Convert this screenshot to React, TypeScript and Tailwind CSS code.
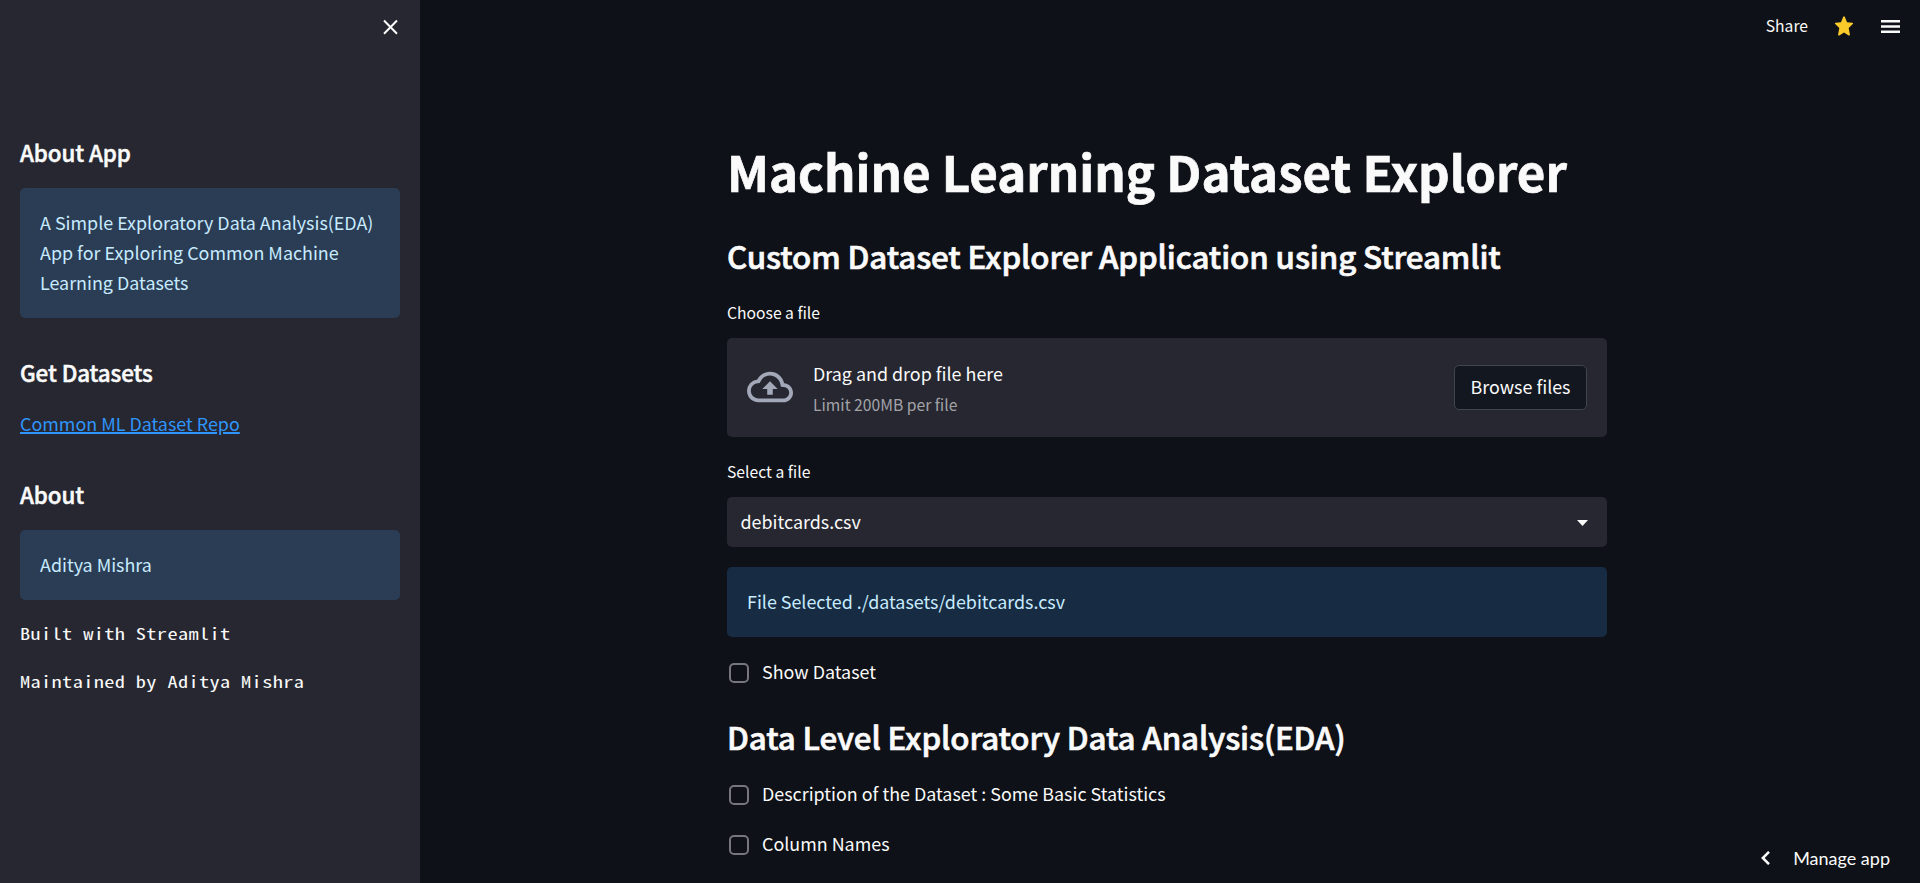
import type { ReactNode } from "react";

function Info({ children, tone }: { children: ReactNode; tone: "side" | "main" }) {
  return (
    <div
      className={
        "rounded-[5px] px-5 pt-[19px] pb-[21px] text-[17.9px] leading-[30px] text-[#c7ebff] " +
        (tone === "side" ? "bg-[#2b3d55]" : "bg-[#172c43]")
      }
    >
      {children}
    </div>
  );
}

function SideHeading({ children, className }: { children: ReactNode; className: string }) {
  return (
    <h3
      className={
        "text-[22.4px] leading-[30px] font-medium tracking-[-0.1px] [-webkit-text-stroke:0.5px_#fafafa] " + className
      }
    >
      {children}
    </h3>
  );
}

function MainHeading({ children, className }: { children: ReactNode; className: string }) {
  return (
    <h2
      className={
        "text-[31.3px] leading-[43px] font-medium tracking-[-0.1px] whitespace-nowrap [-webkit-text-stroke:0.7px_#fafafa] " +
        className
      }
    >
      {children}
    </h2>
  );
}

function MonoLine({ children }: { children: ReactNode }) {
  return (
    <p className="mt-[18px] origin-left scale-x-[1.27] font-['Noto_Sans_Mono_CJK_SC','Liberation_Mono',monospace] text-[16px] leading-[30px] font-light tracking-[0.29px] whitespace-nowrap">
      {children}
    </p>
  );
}

function CheckRow({ label, className }: { label: string; className: string }) {
  return (
    <label className={"flex h-[30px] items-start pl-0.5 " + className}>
      <span className="mt-[7px] size-5 rounded-[5px] border-2 border-[#75777c]" />
      <span className="ml-[13px] text-[17.9px] leading-[30px]">{label}</span>
    </label>
  );
}

export default function App() {
  return (
    <div className="flex h-[883px] w-full overflow-hidden bg-[#0e1117] font-['Noto_Sans_CJK_SC',sans-serif] text-[#fafafa]">
      <aside className="flex h-full w-[420px] shrink-0 flex-col bg-[#262730] px-5">
        <div className="flex h-[137px] shrink-0 justify-end pt-[17px]">
          <svg className="size-5" viewBox="0 0 20 20" fill="none" stroke="#fafafa" strokeWidth="2">
            <path d="M4 3.500 17 16.800M17 3.500 4 16.800" />
          </svg>
        </div>
        <SideHeading className="mb-[21px]">About App</SideHeading>
        <Info tone="side">A Simple Exploratory Data Analysis(EDA) App for Exploring Common Machine Learning Datasets</Info>
        <SideHeading className="mt-[39px] mb-[21px]">Get Datasets</SideHeading>
        <a
          href="#"
          className="self-start text-[17.9px] leading-[30px] text-[#2f95fb] underline decoration-2 underline-offset-[1px]"
        >
          Common ML Dataset Repo
        </a>
        <SideHeading className="mt-[41px] mb-[21px]">About</SideHeading>
        <Info tone="side">Aditya Mishra</Info>
        <MonoLine>Built with Streamlit</MonoLine>
        <MonoLine>Maintained by Aditya Mishra</MonoLine>
      </aside>

      <main className="relative flex grow flex-col">
        <header className="flex h-[138px] shrink-0 items-start justify-end pr-5">
          <span className="mt-[13px] text-[15.7px] leading-[25px]">Share</span>
          <svg className="mt-[16px] ml-[26px] h-5 w-5" viewBox="0 0 20 20" fill="#faca2b">
            <path d="M9.100.9a1 1 0 0 1 1.800 0l2.100 5.300 5.300.5c.8.100 1 .9.500 1.400L14.700 12l1.200 6.500c.100.8-.6 1.300-1.300.9L10 16.600l-4.600 2.800c-.7.4-1.400-.100-1.300-.9L5.300 12 1.200 8.100c-.5-.5-.3-1.300.5-1.400L7 6.200z" />
          </svg>
          <svg className="mt-[20px] ml-[27px] h-[13px] w-[19px]" viewBox="0 0 19 13" fill="#fafafa">
            <path d="M0 0h19v2.500H0zM0 5.300h19v2.400H0zM0 10.500h19V13H0z" />
          </svg>
        </header>

        <div className="flex flex-col items-center pr-1.5">
          <div className="flex w-[880px] flex-col">
            <h1 className="text-[49.2px] leading-[65px] font-bold whitespace-nowrap [-webkit-text-stroke:0.7px_#fafafa]">
              Machine Learning Dataset Explorer
            </h1>
            <MainHeading className="mt-[31px]">Custom Dataset Explorer Application using Streamlit</MainHeading>

            <p className="mt-[23px] mb-[13px] text-[15.7px] leading-[25px]">Choose a file</p>
            <section className="flex h-[99px] items-center rounded-[5px] bg-[#262730] px-5">
              <svg className="mb-0.5 h-[46px] w-[46px]" viewBox="0 0 24 24" fill="#a3a8b8">
                <path d="M19.350 10.040A7.490 7.490 0 0 0 12 4C9.110 4 6.600 5.640 5.350 8.040A5.994 5.994 0 0 0 0 14c0 3.310 2.690 6 6 6h13c2.760 0 5-2.240 5-5 0-2.640-2.050-4.780-4.650-4.960zM19 18H6c-2.210 0-4-1.790-4-4 0-2.050 1.530-3.760 3.560-3.970l1.070-.110.500-.950A5.469 5.469 0 0 1 12 6c2.620 0 4.880 1.860 5.390 4.430l.300 1.500 1.530.110A2.980 2.980 0 0 1 22 15c0 1.650-1.350 3-3 3zM8 13h2.550v3h2.900v-3H16l-4-4z" />
              </svg>
              <div className="ml-5 flex grow flex-col gap-1">
                <span className="text-[17.9px] leading-[30px]">Drag and drop file here</span>
                <span className="text-[15.7px] leading-[25px] text-[#a3a3a8]">Limit 200MB per file</span>
              </div>
              <button className="flex h-[45px] w-[133px] items-center justify-center rounded-[5px] border border-[#41444c] bg-[#131720] pb-[3px] text-[17.9px] leading-[30px]">
                Browse files
              </button>
            </section>

            <p className="mt-[22px] mb-[13px] text-[15.7px] leading-[25px]">Select a file</p>
            <div className="mb-5 flex h-[50px] items-center justify-between rounded-[5px] bg-[#262730] pr-[19px] pb-[2px] pl-[13.500px] text-[17.9px] leading-[30px]">
              <span>debitcards.csv</span>
              <svg className="mt-[4px] h-[6px] w-[11px]" viewBox="0 0 11 6" fill="#fafafa">
                <path d="M0 0h11L5.500 6z" />
              </svg>
            </div>
            <Info tone="main">File Selected ./datasets/debitcards.csv</Info>
            <CheckRow className="mt-[19px]" label="Show Dataset" />
            <MainHeading className="mt-[29px]">Data Level Exploratory Data Analysis(EDA)</MainHeading>
            <CheckRow className="mt-5" label="Description of the Dataset : Some Basic Statistics" />
            <CheckRow className="mt-5" label="Column Names" />
          </div>
        </div>

        <div className="absolute right-[30px] bottom-[10px] flex items-center">
          <svg className="mr-[23px] h-[14px] w-[9px]" viewBox="0 0 9 14" fill="none" stroke="#fafafa" strokeWidth="2.500">
            <path d="M8 .8 1.800 7 8 13.200" />
          </svg>
          <span className="font-['Lato',sans-serif] text-[18px] leading-[30px]">Manage app</span>
        </div>
      </main>
    </div>
  );
}
